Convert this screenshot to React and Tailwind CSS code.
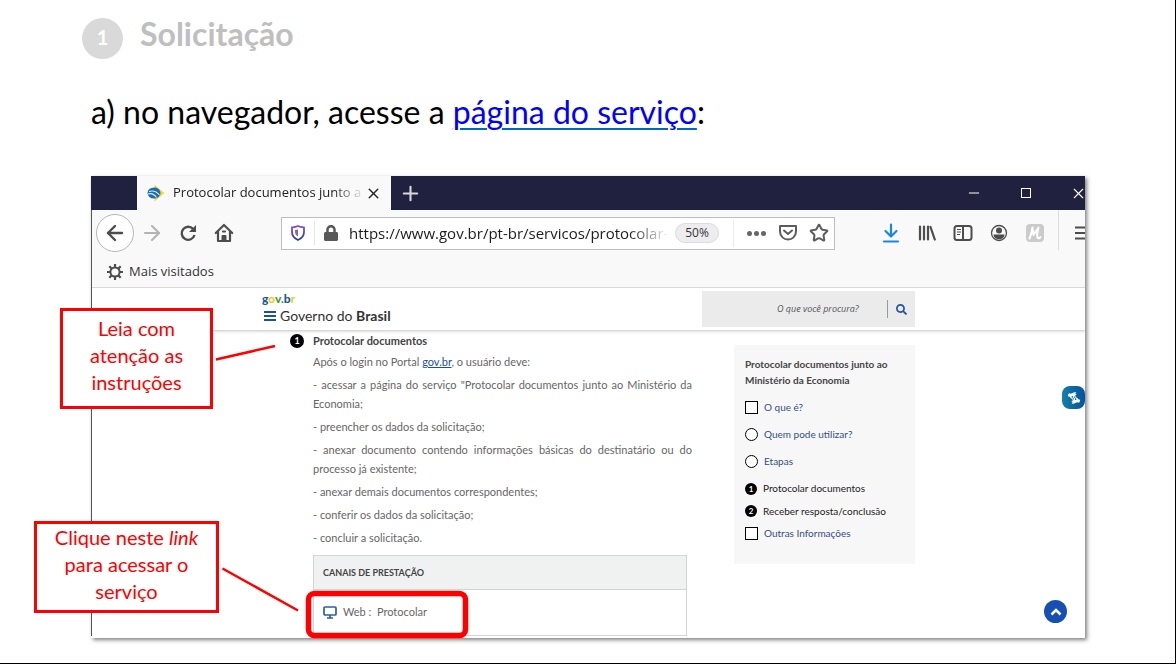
import React from "react";
import { ArrowLeft, ArrowRight, X, Plus, Minus, Star } from "lucide-react";
import { FaLock, FaSearch, FaAmericanSignLanguageInterpreting } from "react-icons/fa";

const steps = [
  '- acessar a página do serviço "Protocolar documentos junto ao Ministério da Economia;',
  "- preencher os dados da solicitação;",
  "- anexar documento contendo informações básicas do destinatário ou do processo já existente;",
  "- anexar demais documentos correspondentes;",
  "- conferir os dados da solicitação;",
  "- concluir a solicitação.",
];

const iconButton = "flex h-9 w-9 shrink-0 items-center justify-center text-[#4d4d4d]";

function TabStrip() {
  return (
    <div className="flex h-[34px] bg-[#20213f] pl-[46px] text-white">
      <div className="flex w-[254px] shrink-0 items-center bg-[#f9f9fa] pr-3 pl-[10px] text-[#222]">
        <svg viewBox="0 0 18 18" className="h-[18px] w-[18px] shrink-0" aria-hidden="true">
          <path d="M7.500 1 17.500 9 7.500 17.500z" fill="#f5dc2c" />
          <path d="M8 2 12.500 6 9 8z" fill="#5bb531" opacity=".6" />
          <ellipse cx="7" cy="9" rx="6.500" ry="5.500" fill="#1e6cb5" />
          <path d="M2 7.500Q8 5.500 12.500 11M1 10Q6 8.500 9.500 13.500" fill="none" stroke="#d6efff" strokeWidth="1.100" />
        </svg>
        <span className="ml-2 w-[188px] shrink-0 whitespace-nowrap text-[13px] [mask-image:linear-gradient(to_right,black_160px,transparent_192px)]">
          Protocolar documentos junto a
        </span>
        <button aria-label="Fechar aba" className="ml-1 shrink-0"><X size={17} strokeWidth={2} /></button>
      </div>
      <button aria-label="Nova aba" className="ml-2 flex items-center text-[#d8d8e0]"><Plus size={23} strokeWidth={2.2} /></button>
      <div className="ml-auto flex items-center">
        <button aria-label="Minimizar" className="flex w-[52px] justify-center"><Minus size={16} strokeWidth={1.5} /></button>
        <button aria-label="Maximizar" className="flex w-[52px] justify-center">
          <svg viewBox="0 0 12 12" className="h-3 w-3" fill="none" stroke="currentColor"><rect x="1.500" y="1.500" width="9" height="9" /></svg>
        </button>
        <button aria-label="Fechar" className="ml-[18px] flex w-[15px] overflow-hidden"><X size={17} strokeWidth={1.5} className="shrink-0" /></button>
      </div>
    </div>
  );
}

function AddressBar() {
  return (
    <div className="mr-[38px] ml-[39px] flex h-[33px] min-w-0 flex-1 items-center border border-[#bebec2] bg-white text-[#5d5d5f]">
      <svg viewBox="0 0 16 16" className="ml-2 h-4 w-4 shrink-0" aria-hidden="true">
        <defs>
          <linearGradient id="shield" x1="0" y1="0" x2="0" y2="1">
            <stop offset="0" stopColor="#8a4bdc" /><stop offset="1" stopColor="#2c3f91" />
          </linearGradient>
        </defs>
        <path d="M8 1C6 2 3.500 2.300 2 2.500V7c0 4 2.500 6.500 6 8 3.500-1.500 6-4 6-8V2.500C12.500 2.300 10 2 8 1z" fill="none" stroke="url(#shield)" strokeWidth="1.800" />
        <path d="M8 4.500v7c-2-1.200-3-2.500-3-5V5c1 0 2-.2 3-.5z" fill="#59459f" opacity=".8" />
      </svg>
      <span className="ml-2 h-6 w-px shrink-0 bg-[#e6e6e6]" />
      <FaLock className="ml-2 h-4 w-4 shrink-0 text-[#59595a]" />
      <input
        aria-label="Endereço"
        readOnly
        value="https://www.gov.br/pt-br/servicos/protocolar-"
        className="ml-[10px] min-w-0 flex-1 bg-transparent text-[15px] text-[#1c1c1e] outline-none [mask-image:linear-gradient(to_right,black_calc(100%-40px),transparent)]"
      />
      <button className="ml-[6px] flex h-5 w-[44px] shrink-0 items-center justify-center rounded-full border border-[#dcdcdc] bg-[#ededf0] text-[12px] text-[#333]">50%</button>
      <span className="ml-[14px] h-7 w-px shrink-0 bg-[#ececec]" />
      <button aria-label="Mais ações" className="ml-3 flex h-5 w-5 shrink-0 items-center justify-center gap-[2px]">
        <i className="h-[5px] w-[5px] rounded-full bg-[#666]" /><i className="h-[5px] w-[5px] rounded-full bg-[#666]" /><i className="h-[5px] w-[5px] rounded-full bg-[#666]" />
      </button>
      <button aria-label="Salvar no Pocket" className="ml-3 shrink-0">
        <svg viewBox="0 0 20 20" className="h-5 w-5" fill="none" stroke="currentColor" strokeWidth="2" strokeLinecap="round" strokeLinejoin="round">
          <path d="M2 3h16v5.500c0 5-4 8-8 8s-8-3-8-8z" /><path d="m6 7.500 4 3.500 4-3.500" />
        </svg>
      </button>
      <button aria-label="Favoritar" className="mr-[5px] ml-[11px] shrink-0"><Star size={20} strokeWidth={2.4} strokeLinejoin="miter" /></button>
    </div>
  );
}

function Toolbar() {
  return (
    <div className="flex h-[46px] items-center bg-[#f9f9fa] pl-1">
      <button aria-label="Voltar" className="flex h-[38px] w-[38px] shrink-0 items-center justify-center rounded-full border border-[#b8b8b8] bg-white text-[#4d4d4d]"><ArrowLeft size={24} strokeWidth={2.4} /></button>
      <button aria-label="Avançar" className="flex h-9 w-9 shrink-0 items-center justify-center text-[#b4b4b4]"><ArrowRight size={24} strokeWidth={2.1} /></button>
      <button aria-label="Recarregar" className={iconButton}>
        <svg viewBox="0 0 18 18" className="h-[18px] w-[18px]" fill="none" stroke="currentColor" strokeWidth="2.400">
          <path d="M14.500 5.500A6.500 6.500 0 1 0 15.500 11" /><path d="M17 1v7h-7z" fill="currentColor" stroke="none" />
        </svg>
      </button>
      <button aria-label="Página inicial" className={iconButton}>
        <svg viewBox="0 0 20 20" className="h-5 w-5" fill="none" stroke="currentColor" strokeWidth="2.200" strokeLinejoin="round" strokeLinecap="round">
          <path d="m1.800 10 8.200-8 8.200 8M4 9v9h12V9" /><path d="M8 18v-5.500h4V18" fill="currentColor" strokeWidth="1" /><path d="M9 8.500h2" />
        </svg>
      </button>
      <AddressBar />
      <button aria-label="Downloads" className="flex h-9 w-9 shrink-0 items-center justify-center text-[#1f86e0]">
        <svg viewBox="0 0 18 20" className="h-5 w-[18px]" fill="none" stroke="currentColor" strokeWidth="2.200" strokeLinecap="round" strokeLinejoin="round"><path d="M9 1.500V13M3.500 8 9 13.500 14.500 8M2 18.500h14" /></svg>
      </button>
      <button aria-label="Biblioteca" className={iconButton}>
        <svg viewBox="0 0 18 18" className="h-[18px] w-[18px]" fill="none" stroke="currentColor" strokeWidth="2.200" strokeLinecap="round"><path d="M2 2.500v13M6 2.500v13M10 2.500v13M12.500 3l4.300 12.500" /></svg>
      </button>
      <button aria-label="Barra lateral" className={iconButton}>
        <svg viewBox="0 0 20 18" className="h-[18px] w-5" fill="none" stroke="currentColor" strokeWidth="2"><rect x="1.500" y="2" width="17" height="14" rx="2.500" /><path d="M10 2v14" /><path d="M4 5.500h4M4 8h4M4 10.500h3" strokeWidth="1.200" /></svg>
      </button>
      <button aria-label="Conta" className={iconButton}>
        <svg viewBox="0 0 18 18" className="h-[18px] w-[18px]"><circle cx="9" cy="9" r="7.500" fill="none" stroke="currentColor" strokeWidth="1.300" /><circle cx="9" cy="6.500" r="3" fill="currentColor" /><path d="M3.500 10.500h11c0 3-2.500 4.800-5.500 4.800s-5.500-1.800-5.500-4.800z" fill="currentColor" /></svg>
      </button>
      <button aria-label="Extensão" className={iconButton}>
        <svg viewBox="0 0 18 18" className="h-[18px] w-[18px]"><rect width="18" height="18" rx="4" fill="#cbcbcb" /><path d="M3.500 14.500C5 11 6 7 6.500 3.500L7.500 11l5-7.500c-1 4-1.800 8-1 10 .6 1.200 2 1 3-.5" fill="none" stroke="white" strokeWidth="2" strokeLinejoin="round" strokeLinecap="round" /></svg>
      </button>
      <span className="ml-[5px] h-10 w-px shrink-0 self-start bg-[#dedede]" />
      <button aria-label="Menu" className="flex w-[26px] shrink-0 overflow-hidden pl-4 text-[#4d4d4d]">
        <svg viewBox="0 0 18 16" className="h-4 w-[18px] shrink-0" stroke="currentColor" strokeWidth="2.200"><path d="M0 2.500h18M0 8h18M0 13.500h18" /></svg>
      </button>
    </div>
  );
}

function GearIcon() {
  return (
    <svg viewBox="0 0 16 16" className="h-4 w-4" fill="none" stroke="#4d4d4d" aria-hidden="true">
      <circle cx="8" cy="8" r="4.600" strokeWidth="2" />
      <path d="M8 0v3M8 13v3M0 8h3M13 8h3M2.300 2.300l2.200 2.200M11.500 11.500l2.200 2.200M2.300 13.700l2.200-2.200M11.500 4.500l2.200-2.200" strokeWidth="2.200" />
    </svg>
  );
}

function SiteHeader() {
  return (
    <header className="border-b border-[#d9d9d9] bg-white shadow-sm">
      <div className="mx-auto flex h-[42px] w-full max-w-[653px] items-center justify-between font-[Lato,sans-serif]">
        <div>
          <div className="text-[12px] leading-[14px] font-black text-[#1659a6]">
            g<span className="text-[#f2cc24]">o</span><span className="text-[#3a9c46]">v.</span>b<span className="text-[#f2cc24]">r</span>
          </div>
          <div className="flex items-center gap-1">
            <button aria-label="Abrir menu" className="text-[#1c4f9c]">
              <svg viewBox="0 0 14 12" className="h-3 w-[14px]" stroke="currentColor" strokeWidth="2"><path d="M2 2h12M2 6h12M2 10h12" /></svg>
            </button>
            <span className="text-[14px] leading-5 text-[#333]">Governo do <b className="font-bold">Brasil</b></span>
          </div>
        </div>
        <form className="flex h-9 w-[213px] items-center bg-[#ebebeb] pl-[75px]">
          <input aria-label="Pesquisar" placeholder="O que você procura?" className="min-w-0 flex-1 bg-transparent font-[Open_Sans,sans-serif] text-[9px] italic outline-none placeholder:text-[#555]" />
          <span className="h-[18px] w-px bg-[#999]" />
          <button type="button" aria-label="Buscar" className="px-2 text-[#2554a3]"><FaSearch size={11} /></button>
        </form>
      </div>
    </header>
  );
}

function Instructions() {
  return (
    <article className="ml-7 flex min-w-0 flex-1 gap-[9px]">
      <span className="mt-[3px] flex h-[14px] w-[14px] shrink-0 items-center justify-center rounded-full bg-black text-[9px] font-bold text-white">1</span>
      <div className="min-w-0 flex-1 text-[#666]">
        <h2 className="text-[11px] leading-[19px] font-bold text-[#444]">Protocolar documentos</h2>
        <div className="mt-[2px] flex flex-col gap-1 text-justify text-[11px] leading-[19px]">
          <p>Após o login no Portal <a href="#govbr" className="text-[#1c4f9c] underline">gov.br</a>, o usuário deve:</p>
          {steps.map((s) => <p key={s}>{s}</p>)}
        </div>
        <section className="mt-2 mr-[5px] border border-b-0 border-[#d4d4d4]">
          <h3 className="border-b border-[#d4d4d4] bg-[#f0f2f2] px-[9px] text-[9px] leading-[33px] font-bold text-[#444]">CANAIS DE PRESTAÇÃO</h3>
          <a href="#protocolar" className="flex h-[46px] items-center gap-[6px] border-b border-[#d4d4d4] px-[9px] text-[11px]">
            <svg viewBox="0 0 14 13" className="h-[13px] w-[14px]" fill="none" stroke="#2c5bb0" strokeWidth="1.700"><rect x="1" y="1" width="12" height="8" rx="1" /><path d="M7 9v3M4 12h6" /></svg>
            <span>Web :&nbsp; Protocolar</span>
          </a>
        </section>
      </div>
    </article>
  );
}

function Summary() {
  const box = "h-[13px] w-[13px] shrink-0 appearance-none border border-black bg-white";
  const disc = "flex h-3 w-3 items-center justify-center rounded-full bg-black text-[8px] font-bold text-white";
  return (
    <aside className="mt-[14px] h-[219px] w-[181px] shrink-0 bg-[#f7f7f7] px-[11px] pt-[11px] text-[10px] text-[#222]">
      <h2 className="leading-4 font-bold text-[#444]">Protocolar documentos junto ao Ministério da Economia</h2>
      <div className="mt-[6px] text-[#34507f]">
        <label className="flex h-[27px] items-center gap-[6px]"><input type="checkbox" className={box} />O que é?</label>
        <label className="flex h-[27px] items-center gap-[6px]"><input type="radio" name="secao" className="h-[13px] w-[13px] shrink-0 appearance-none rounded-full border border-black bg-white" />Quem pode utilizar?</label>
        <label className="flex h-[27px] items-center gap-[6px]"><input type="radio" name="secao" className="h-[13px] w-[13px] shrink-0 appearance-none rounded-full border border-black bg-white" />Etapas</label>
        <div className="flex h-[27px] items-center gap-[6px] text-[#222]"><span className={disc}>1</span>Protocolar documentos</div>
        <div className="flex h-[18px] items-center gap-[6px] text-[#222]"><span className={disc}>2</span>Receber resposta/conclusão</div>
        <label className="flex h-[27px] items-center gap-[6px]"><input type="checkbox" className={box} />Outras Informações</label>
      </div>
    </aside>
  );
}

export default function App() {
  return (
    <main className="relative min-h-screen overflow-hidden border-r border-b border-black bg-white font-[Lato,sans-serif]">
      <header className="flex items-start gap-[17px] pt-[18px] pl-[82px]">
        <span className="flex h-[41px] w-[41px] items-center justify-center rounded-full bg-[#d9d9d9] pb-[3px] text-[20px] font-bold text-white">1</span>
        <h1 className="text-[32px] leading-8 font-bold text-[#bfbfbf]">Solicitação</h1>
      </header>
      <p className="mt-[33px] ml-[91px] text-[32px] leading-10 text-black">
        a) no navegador, acesse a <a href="#servico" className="text-[#0000ff] underline decoration-[#0563c1] decoration-2 underline-offset-4">página do serviço</a>:
      </p>

      <section className="relative mx-[90px] mt-11 ml-[91px] h-[462px] overflow-hidden bg-white font-[Open_Sans,sans-serif] shadow-[2px_2px_4px_rgba(0,0,0,0.5)]">
        <TabStrip />
        <div className="border-l border-[#555]">
          <Toolbar />
          <div className="flex h-8 items-center border-b border-[#ddd] bg-[#f9f9fa] pl-[15px]">
            <button className="flex items-center gap-[6px] text-[13px] text-[#333]"><GearIcon />Mais visitados</button>
          </div>
          <SiteHeader />
          <div className="mx-auto flex w-full max-w-[653px] items-start gap-[42px] font-[Lato,sans-serif]">
            <Instructions />
            <Summary />
          </div>
        </div>
        <button aria-label="Libras" className="absolute top-[210px] right-0 flex h-[23px] w-[23px] items-center justify-center rounded-lg bg-gradient-to-r from-[#167fa8] to-[#07529c] text-white"><FaAmericanSignLanguageInterpreting size={14} className="rotate-45" /></button>
        <button aria-label="Voltar ao topo" className="absolute right-[18px] bottom-[15px] flex h-[23px] w-[23px] items-center justify-center rounded-full bg-[#1750b3] text-white">
          <svg viewBox="0 0 12 8" className="h-2 w-3" fill="none" stroke="currentColor" strokeWidth="2.600"><path d="m1.500 6.500 4.500-4.500 4.500 4.500" /></svg>
        </button>
      </section>

      <svg className="pointer-events-none absolute top-0 left-0 h-[664px] w-[480px]" viewBox="0 0 480 664" fill="none" stroke="#f00" aria-hidden="true">
        <path d="M216 359.500 275 346M222.500 568.500 298 610.500" strokeWidth="2.500" />
        <rect x="308.500" y="593.500" width="157" height="42" rx="6" strokeWidth="5.500" />
      </svg>
      <div className="absolute top-[308px] left-[60px] flex h-[101px] w-[153px] items-start justify-center border-[3px] border-[#f00] bg-white pt-1 text-center text-[20px] leading-[27px] text-[#f00]">
        <p>Leia com<br />atenção as<br />instruções</p>
      </div>
      <div className="absolute top-[521px] left-[34px] flex h-[92px] w-[185px] items-start justify-center border-[3px] border-[#f00] bg-white text-center text-[20px] leading-[27px] text-[#f00]">
        <p>Clique neste <em>link</em><br />para acessar o<br />serviço</p>
      </div>
    </main>
  );
}
